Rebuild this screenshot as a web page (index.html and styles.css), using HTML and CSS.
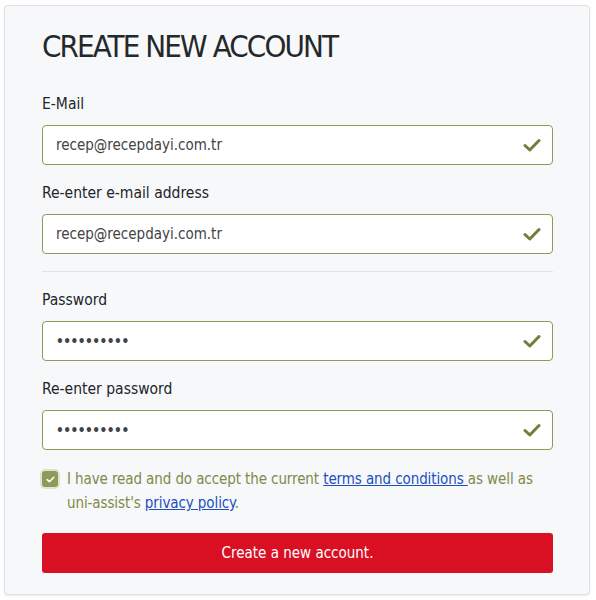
FILE: index.html
```html
<!DOCTYPE html>
<html>
<head>
<meta charset="utf-8">
<link rel="stylesheet" href="styles.css">
</head>
<body>
<div class="card">
  <h1 class="title">CREATE NEW ACCOUNT</h1>
  <div class="field">
    <label class="label">E-Mail</label>
    <div class="input"><span class="value">recep@recepdayi.com.tr</span>
      <svg class="check" viewBox="0 0 18 14" width="18" height="14"><path d="M2 7.5 L6.8 12 L16 2.5" fill="none" stroke="#6f7f3a" stroke-width="3" stroke-linecap="round" stroke-linejoin="round"/></svg>
    </div>
  </div>
  <div class="field">
    <label class="label">Re-enter e-mail address</label>
    <div class="input"><span class="value">recep@recepdayi.com.tr</span>
      <svg class="check" viewBox="0 0 18 14" width="18" height="14"><path d="M2 7.5 L6.8 12 L16 2.5" fill="none" stroke="#6f7f3a" stroke-width="3" stroke-linecap="round" stroke-linejoin="round"/></svg>
    </div>
  </div>
  <hr class="divider">
  <div class="field">
    <label class="label">Password</label>
    <div class="input"><span class="value dots">••••••••••</span>
      <svg class="check" viewBox="0 0 18 14" width="18" height="14"><path d="M2 7.5 L6.8 12 L16 2.5" fill="none" stroke="#6f7f3a" stroke-width="3" stroke-linecap="round" stroke-linejoin="round"/></svg>
    </div>
  </div>
  <div class="field">
    <label class="label">Re-enter password</label>
    <div class="input"><span class="value dots">••••••••••</span>
      <svg class="check" viewBox="0 0 18 14" width="18" height="14"><path d="M2 7.5 L6.8 12 L16 2.5" fill="none" stroke="#6f7f3a" stroke-width="3" stroke-linecap="round" stroke-linejoin="round"/></svg>
    </div>
  </div>
  <div class="agree">
    <span class="box"><svg viewBox="0 0 10 8" width="9" height="7"><path d="M1.2 4.2 L3.8 6.5 L8.8 1.5" fill="none" stroke="#fff" stroke-width="1.8" stroke-linecap="round" stroke-linejoin="round"/></svg></span>
    <p class="agree-text">I have read and do accept the current <a href="#">terms and conditions </a>as well as uni-assist's <a href="#">privacy policy</a>.</p>
  </div>
  <button class="submit">Create a new account.</button>
</div>
</body>
</html>
```
FILE: styles.css
```css
html, body { margin: 0; padding: 0; background: #ffffff; }
body {
  padding: 5px 6px 5px 4px;
  font-family: "DejaVu Sans Condensed", "DejaVu Sans", sans-serif;
  color: #212529;
}
.card {
  background: #f7f8fa;
  border: 1px solid #dfe1e5;
  border-radius: 4px;
  padding: 22px 36px 21px 37px;
  box-shadow: 0 1px 2px rgba(0,0,0,0.08);
}
.title {
  margin: 0 0 30px;
  font-size: 31px;
  font-weight: normal;
  line-height: 36px;
  color: #25282b;
  letter-spacing: -1.9px;
}
.field + .field { margin-top: 18px; }
.label {
  display: block;
  font-size: 15.5px;
  line-height: 20px;
  margin-bottom: 11px;
  color: #212529;
}
.input {
  display: flex;
  align-items: center;
  justify-content: space-between;
  height: 38px;
  background: #fff;
  border: 1px solid #8c9a5a;
  border-radius: 4px;
  padding: 0 11px 0 13px;
}
.value { font-size: 15px; color: #444; }
.dots { font-size: 13.5px; letter-spacing: -0.5px; color: #3f444a; font-weight: bold; }
.divider {
  border: 0;
  border-top: 1px solid #e1e3e6;
  margin: 17px 0 18px;
}
.agree { display: flex; align-items: flex-start; gap: 9px; margin-top: 17px; }
.box {
  flex: none;
  width: 16px; height: 16px;
  margin-top: 4px;
  background: #8c9a5a;
  border-radius: 3px;
  box-shadow: 0 0 0 2px #dfe3cf;
  display: flex; align-items: center; justify-content: center;
}
.agree-text {
  margin: 0;
  font-size: 15px;
  line-height: 24px;
  letter-spacing: -0.1px;
  color: #7d8a4a;
}
.agree-text a { color: #1d4fbf; text-decoration: underline; }
.submit {
  display: block;
  width: 100%;
  height: 40px;
  margin-top: 18px;
  border: 0;
  border-radius: 3px;
  background: #d91023;
  color: #fff;
  font-family: inherit;
  font-size: 15px;
}
```
